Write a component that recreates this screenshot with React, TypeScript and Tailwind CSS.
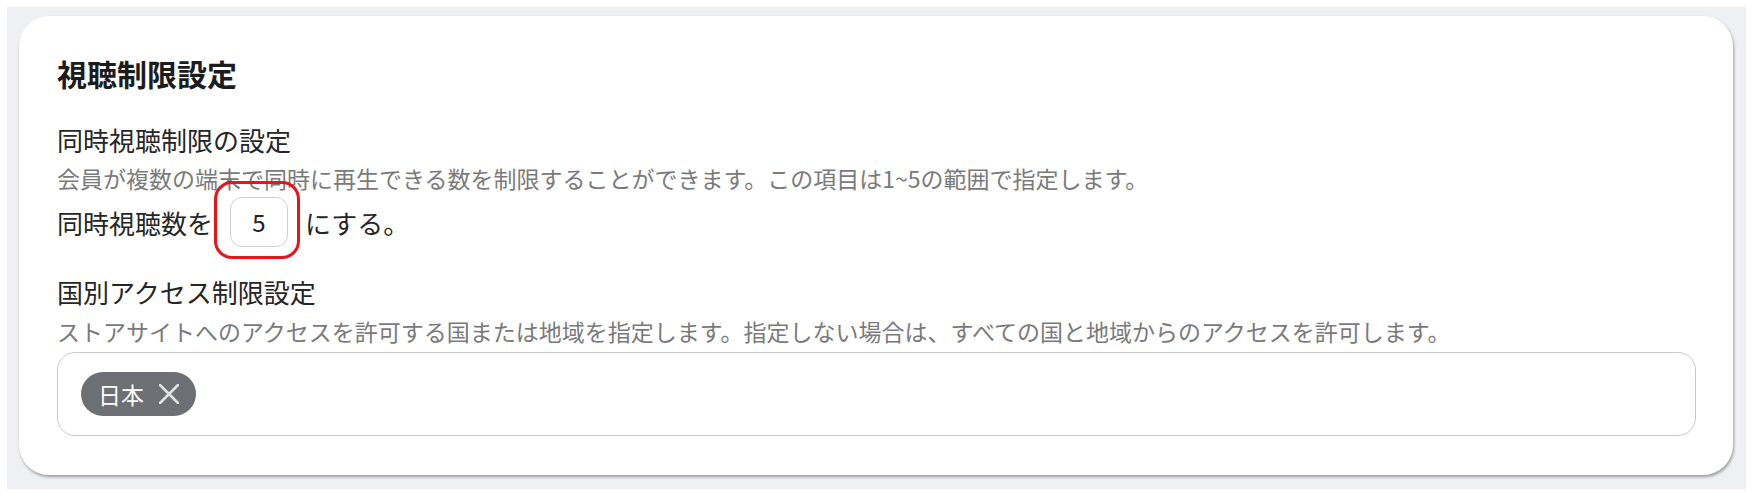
export default function App() {
  return (
    <div
      className="h-[498px] w-[1753px] bg-white pt-[7px] pr-[7px] pb-[9px] pl-[7px]"
      style={{ fontFamily: '"Noto Sans CJK JP", "Noto Sans", sans-serif' }}
    >
      <div className="h-full w-full bg-[#eff0f4] pt-[9px] pr-[13px] pl-[12px]">
        <div className="h-[459px] rounded-[30px] bg-white pt-[38px] pr-[37px] pb-[38px] pl-[38px] shadow-[1px_2px_3px_rgba(0,0,0,0.35)]">
          <h2 className="text-[30px] leading-[38px] font-bold text-[#1c1c1c]">
            視聴制限設定
          </h2>

          <p className="mt-[29px] text-[26px] leading-[38px] text-[#262626]">
            同時視聴制限の設定
          </p>
          <p className="text-[23px] leading-[38px] text-[#7a7a7a]">
            会員が複数の端末で同時に再生できる数を制限することができます。この項目は1~5の範囲で指定します。
          </p>
          <div className="flex h-[50px] items-center text-[26px] text-[#262626]">
            <span>同時視聴数を</span>
            <div className="relative mx-[17px]">
              <div className="flex h-[50px] w-[58px] items-center justify-center rounded-[12px] border border-[#cfcfcf] text-[24px] text-[#222]">
                5
              </div>
              <div className="pointer-events-none absolute -top-[16px] -left-[16px] h-[78px] w-[86px] rounded-[18px] border-[3px] border-[#e8141a]" />
            </div>
            <span>にする。</span>
          </div>

          <p className="mt-[26px] text-[26px] leading-[38px] text-[#262626]">
            国別アクセス制限設定
          </p>
          <p className="text-[23px] leading-[40px] text-[#7a7a7a]">
            ストアサイトへのアクセスを許可する国または地域を指定します。指定しない場合は、すべての国と地域からのアクセスを許可します。
          </p>
          <div className="mt-px flex h-[84px] items-start rounded-[18px] border border-[#c9c9c9] pt-[19px] pl-[23px]">
            <span className="flex h-[44px] items-center gap-[15px] rounded-full bg-[#6c6f73] pr-[17px] pl-[17px] text-[23px] text-white">
              日本
              <svg width="20" height="20" viewBox="0 0 20 20" fill="none">
                <path
                  d="M1 1L19 19M19 1L1 19"
                  stroke="#e2e2e2"
                  strokeWidth="2.6"
                  strokeLinecap="round"
                />
              </svg>
            </span>
          </div>
        </div>
      </div>
    </div>
  );
}
